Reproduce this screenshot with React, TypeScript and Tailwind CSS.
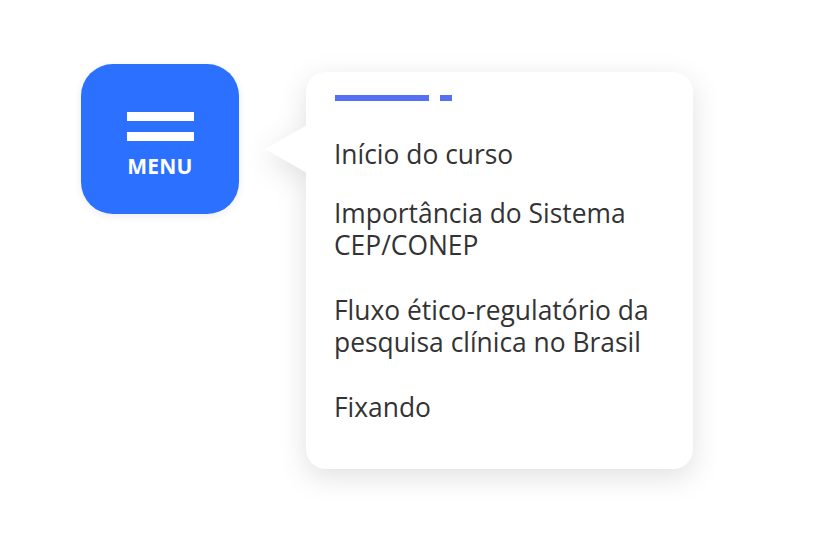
export default function App() {
    const items = [
        { label: ["Início do curso"], mt: "mt-[37px]" },
        { label: ["Importância do Sistema", "CEP/CONEP"], mt: "mt-[27px]" },
        { label: ["Fluxo ético-regulatório da", "pesquisa clínica no Brasil"], mt: "mt-[33px]" },
        { label: ["Fixando"], mt: "mt-[33px]" },
    ]

    return <div className="w-[821px] h-[558px] bg-white flex items-start pl-[81px] pt-[64px] font-['Open_Sans',sans-serif]">
        <div className="w-[158px] h-[150px] rounded-[32px] bg-[#2b70ff] flex flex-col items-center pt-[48px] shadow-[0_2px_8px_rgba(0,0,0,0.08)]">
            <div className="w-[67px] h-[9px] bg-white" />
            <div className="w-[67px] h-[9px] bg-white mt-[11px]" />
            <p className="text-white font-bold text-[21px] leading-none mt-[15px] tracking-[0.2px]">MENU</p>
        </div>

        <div className="relative ml-[67px] mt-[8px] drop-shadow-[0_8px_14px_rgba(0,0,0,0.12)]">
            <svg className="absolute left-[-41px] top-[53px]" width="42" height="48" viewBox="0 0 42 48">
                <polygon points="0,24 42,0 42,48" fill="#ffffff" />
            </svg>
            <div className="w-[387px] h-[397px] bg-white rounded-[20px] pt-[23px] pl-[28px] pr-[20px]">
                <div className="flex items-center">
                    <div className="w-[94px] h-[6px] bg-[#5570f5] ml-[1px]" />
                    <div className="w-[12px] h-[6px] bg-[#5570f5] ml-[11px]" />
                </div>
                {items.map((item) => (
                    <div key={item.label[0]} className={`${item.mt} text-[26.4px] leading-[32px] text-[#333333]`}>
                        {item.label.map((line) => (
                            <p key={line}>{line}</p>
                        ))}
                    </div>
                ))}
            </div>
        </div>
    </div>
}
